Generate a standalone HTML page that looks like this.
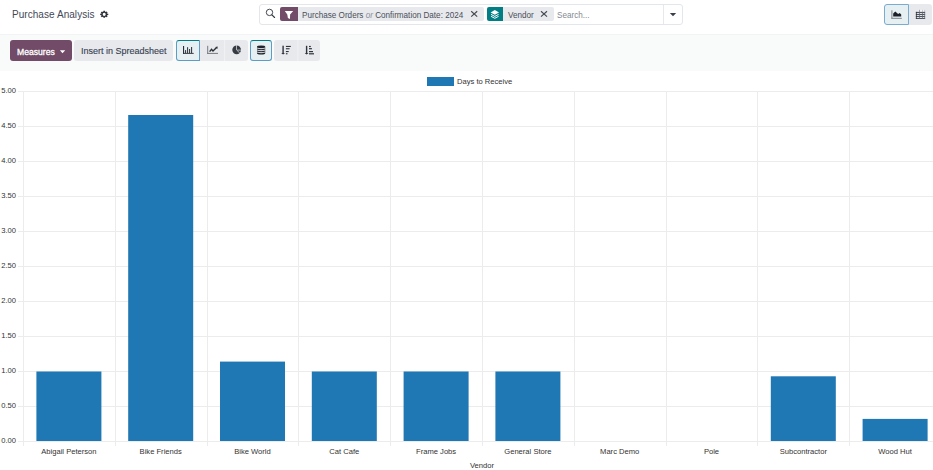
<!DOCTYPE html>
<html><head><meta charset="utf-8">
<style>
*{box-sizing:border-box;margin:0;padding:0}
html,body{width:933px;height:470px;overflow:hidden;background:#fff;font-family:"Liberation Sans",sans-serif;position:relative}
.abs{position:absolute}
#title{left:12px;top:8.7px;font-size:10px;letter-spacing:0.05px;color:#434857;white-space:nowrap;line-height:12px}
#searchbox{left:259px;top:4px;width:424px;height:21px;border:1px solid #e3e6ea;border-radius:3px;background:#fff}
#divider{left:663px;top:5px;width:1px;height:19px;background:#e6e8eb}
.pill{position:absolute;top:7px;height:14px;background:#e7e9ed;border-radius:2px}
.ficon{position:absolute;top:7px;height:14px;border-radius:2px 0 0 2px}
.ftext{position:absolute;top:10.2px;font-size:8.15px;line-height:12px;color:#4b4f58;white-space:nowrap}
#toolbar{left:0;top:34px;width:933px;height:37px;background:#f9fafa;border-top:1px solid #f2f3f4}
.btn{position:absolute;top:40px;height:21px;background:#e7e9ed;border-radius:3px}
.act{background:#e6f0f2;border:1px solid #5b9dc4;border-top-color:#017e84}
.yl{position:absolute;left:0;width:16px;text-align:right;font-size:7.6px;line-height:10px;color:#333;white-space:nowrap}
.xl{position:absolute;top:445.9px;width:100px;text-align:center;font-size:7.6px;line-height:12px;color:#333;white-space:nowrap}
</style></head><body>
<div id="title" class="abs">Purchase Analysis</div>
<div id="searchbox" class="abs"></div>
<div id="divider" class="abs"></div>
<div class="ficon" style="left:280px;width:18px;background:#714b67"></div>
<div class="pill" style="left:298px;width:186px;border-radius:0 2px 2px 0"></div>
<div class="ftext" style="left:302px">Purchase Orders <i style="color:#8a8f98">or</i> Confirmation Date: 2024</div>
<div class="ficon" style="left:487px;width:16px;background:#017e84"></div>
<div class="pill" style="left:503px;width:51px;border-radius:0 2px 2px 0"></div>
<div class="ftext" style="left:508px">Vendor</div>
<div class="ftext" style="left:557px;color:#858a92">Search...</div>
<div class="abs act" style="left:884px;top:4px;width:25px;height:21px;border-radius:3px 0 0 3px;border-color:#78acd0"></div>
<div class="abs" style="left:909px;top:4px;width:23px;height:21px;background:#e7e9ed;border-radius:0 3px 3px 0"></div>
<div id="toolbar" class="abs"></div>
<div class="btn" style="left:10px;width:62px;background:#714b67"></div>
<div class="abs" style="left:17px;top:45.7px;font-size:8.6px;line-height:12px;color:#fff;-webkit-text-stroke:0.3px #fff">Measures</div>
<div class="btn" style="left:74px;width:99px"></div>
<div class="abs" style="left:81px;top:45px;font-size:9px;line-height:12px;color:#374151;-webkit-text-stroke:0.12px #374151">Insert in Spreadsheet</div>
<div class="btn act" style="left:176px;width:24px;border-radius:3px 0 0 3px"></div>
<div class="btn" style="left:200px;width:24px;border-radius:0"></div>
<div class="btn" style="left:224px;width:24px;border-radius:0 3px 3px 0"></div>
<div class="btn act" style="left:250px;width:22px"></div>
<div class="btn" style="left:274px;width:23px;border-radius:3px 0 0 3px"></div>
<div class="btn" style="left:297px;width:23px;border-radius:0 3px 3px 0"></div>
<div class="abs" style="left:427px;top:77px;width:27px;height:9px;background:#1f77b4"></div>
<div class="abs" style="left:457px;top:75.6px;font-size:7.6px;line-height:12px;color:#333">Days to Receive</div>
<div class="abs" style="left:432px;top:460px;width:100px;text-align:center;font-size:7.6px;line-height:12px;color:#333">Vendor</div>
<svg id="chart" width="933" height="399" viewBox="0 71 933 399" style="position:absolute;left:0;top:71px" shape-rendering="crispEdges">
<rect x="18" y="91" width="925" height="1" fill="#ececec"/>
<rect x="18" y="126" width="925" height="1" fill="#ececec"/>
<rect x="18" y="161" width="925" height="1" fill="#ececec"/>
<rect x="18" y="196" width="925" height="1" fill="#ececec"/>
<rect x="18" y="231" width="925" height="1" fill="#ececec"/>
<rect x="18" y="266" width="925" height="1" fill="#ececec"/>
<rect x="18" y="301" width="925" height="1" fill="#ececec"/>
<rect x="18" y="336" width="925" height="1" fill="#ececec"/>
<rect x="18" y="371" width="925" height="1" fill="#ececec"/>
<rect x="18" y="406" width="925" height="1" fill="#ececec"/>
<rect x="18" y="441" width="925" height="1" fill="#ececec"/>
<rect x="23" y="91" width="1" height="355" fill="#ececec"/>
<rect x="115" y="91" width="1" height="355" fill="#ececec"/>
<rect x="207" y="91" width="1" height="355" fill="#ececec"/>
<rect x="298" y="91" width="1" height="355" fill="#ececec"/>
<rect x="390" y="91" width="1" height="355" fill="#ececec"/>
<rect x="482" y="91" width="1" height="355" fill="#ececec"/>
<rect x="574" y="91" width="1" height="355" fill="#ececec"/>
<rect x="666" y="91" width="1" height="355" fill="#ececec"/>
<rect x="757" y="91" width="1" height="355" fill="#ececec"/>
<rect x="849" y="91" width="1" height="355" fill="#ececec"/>
<rect x="36.4" y="371.5" width="65" height="69.5" fill="#1f77b4" shape-rendering="auto"/>
<rect x="128.2" y="115.0" width="65" height="326.0" fill="#1f77b4" shape-rendering="auto"/>
<rect x="220.0" y="361.6" width="65" height="79.4" fill="#1f77b4" shape-rendering="auto"/>
<rect x="311.8" y="371.5" width="65" height="69.5" fill="#1f77b4" shape-rendering="auto"/>
<rect x="403.6" y="371.5" width="65" height="69.5" fill="#1f77b4" shape-rendering="auto"/>
<rect x="495.4" y="371.5" width="65" height="69.5" fill="#1f77b4" shape-rendering="auto"/>
<rect x="770.8" y="376.3" width="65" height="64.7" fill="#1f77b4" shape-rendering="auto"/>
<rect x="862.6" y="418.9" width="65" height="22.1" fill="#1f77b4" shape-rendering="auto"/>
</svg>
<div class="yl" style="top:86.2px">5.00</div>
<div class="yl" style="top:121.2px">4.50</div>
<div class="yl" style="top:156.2px">4.00</div>
<div class="yl" style="top:191.2px">3.50</div>
<div class="yl" style="top:226.2px">3.00</div>
<div class="yl" style="top:261.2px">2.50</div>
<div class="yl" style="top:296.2px">2.00</div>
<div class="yl" style="top:331.2px">1.50</div>
<div class="yl" style="top:366.2px">1.00</div>
<div class="yl" style="top:401.2px">0.50</div>
<div class="yl" style="top:436.2px">0.00</div>
<div class="xl" style="left:18.9px">Abigail Peterson</div>
<div class="xl" style="left:110.7px">Bike Friends</div>
<div class="xl" style="left:202.5px">Bike World</div>
<div class="xl" style="left:294.3px">Cat Cafe</div>
<div class="xl" style="left:386.1px">Frame Jobs</div>
<div class="xl" style="left:477.9px">General Store</div>
<div class="xl" style="left:569.7px">Marc Demo</div>
<div class="xl" style="left:661.5px">Pole</div>
<div class="xl" style="left:753.3px">Subcontractor</div>
<div class="xl" style="left:845.1px">Wood Hut</div><svg class="abs" style="left:0;top:0" width="933" height="71" viewBox="0 0 933 71">
<path d="M103.16,11.98 L103.38,10.85 L105.02,10.85 L105.24,11.98 L105.42,12.04 L106.49,11.38 L107.66,12.38 L106.89,13.30 L106.96,13.46 L108.27,13.64 L108.27,15.06 L106.96,15.24 L106.89,15.40 L107.66,16.32 L106.49,17.32 L105.42,16.66 L105.24,16.72 L105.02,17.85 L103.38,17.85 L103.16,16.72 L102.98,16.66 L101.91,17.32 L100.74,16.32 L101.51,15.40 L101.44,15.24 L100.13,15.06 L100.13,13.64 L101.44,13.46 L101.51,13.30 L100.74,12.38 L101.91,11.38 L102.98,12.04Z M105.70,14.35 A1.5,1.6 0 1,0 102.70,14.35 A1.5,1.6 0 1,0 105.70,14.35Z" fill="#2f333b" fill-rule="evenodd"/>
<circle cx="269.5" cy="12.4" r="3.2" fill="none" stroke="#2f333b" stroke-width="0.9"/>
<line x1="271.9" y1="14.8" x2="274.6" y2="17.5" stroke="#2f333b" stroke-width="1.1" stroke-linecap="round"/>
<path d="M284.8,10.9 L293.2,10.9 L290.1,14.6 L290,19 L287.9,18 L287.3,14.6Z" fill="#fff"/>
<path d="M490.6,12.4 L494.8,10.1 L499,12.4 L494.8,14.7Z" fill="#fff"/>
<path d="M491,14.4 L494.8,16.4 L498.6,14.4" fill="none" stroke="#fff" stroke-width="1"/>
<path d="M491,16.3 L494.8,18.3 L498.6,16.3" fill="none" stroke="#fff" stroke-width="1"/>
<path d="M471.2,11.2 L477.2,16.6 M477.2,11.2 L471.2,16.6" stroke="#454951" stroke-width="1.15"/>
<path d="M541.0,11.2 L547.0,16.6 M547.0,11.2 L541.0,16.6" stroke="#454951" stroke-width="1.15"/>
<path d="M669.8,12.9 L676.2,12.9 L673,16.2Z" fill="#3b3f47"/>
<path d="M59.9,50.3 L65.2,50.3 L62.55,53.2Z" fill="#fff"/>
<rect x="183" y="46" width="1.1" height="7.8" fill="#2a2e36"/>
<rect x="183" y="52.9" width="10.7" height="0.9" fill="#2a2e36"/>
<rect x="185.1" y="50.1" width="1" height="3.1" fill="#2a2e36"/>
<rect x="187.1" y="47.2" width="1" height="6.0" fill="#2a2e36"/>
<rect x="189.1" y="49" width="1" height="4.2" fill="#2a2e36"/>
<rect x="191.1" y="47" width="1" height="6.2" fill="#2a2e36"/>
<rect x="207.2" y="45.8" width="1" height="8.1" fill="#77797e"/>
<rect x="207.2" y="52.9" width="10.8" height="1" fill="#77797e"/>
<path d="M209.6,51.6 L211.5,49.3 L213,51 L216.6,47.6" fill="none" stroke="#2a2e36" stroke-width="1.4"/>
<path d="M215.3,46.9 L217.7,46.6 L217.4,49Z" fill="#2a2e36"/>
<circle cx="236.65" cy="49.8" r="4.35" fill="#363a43"/>
<path d="M236.5,45.2 L236.5,49.9 L239.9,53.2 M237.2,50.1 L241.3,50.1" fill="none" stroke="#e7e9ed" stroke-width="0.7"/>
<path d="M257,46.6 Q257,45.4 261.1,45.4 Q265.2,45.4 265.2,46.6 L265.2,53.3 Q265.2,54.5 261.1,54.5 Q257,54.5 257,53.3Z" fill="#1f232b"/>
<path d="M256.8,47.9 Q261.1,49.3 265.4,47.9" fill="none" stroke="#c8ccd0" stroke-width="1.05"/>
<path d="M256.8,49.9 Q261.1,51.3 265.4,49.9" fill="none" stroke="#c8ccd0" stroke-width="1.05"/>
<path d="M256.8,51.9 Q261.1,53.3 265.4,51.9" fill="none" stroke="#c8ccd0" stroke-width="1.05"/>
<rect x="282.4" y="45.7" width="1.4" height="8" fill="#30343c"/>
<path d="M281.2,52.9 L285,52.9 L283.1,54.6Z" fill="#30343c"/>
<rect x="285.9" y="45.9" width="4.9" height="1.1" fill="#30343c"/>
<rect x="285.9" y="48.2" width="3.7" height="1.1" fill="#30343c"/>
<rect x="285.9" y="51" width="2.8" height="1.1" fill="#30343c"/>
<rect x="285.9" y="53.2" width="1.6" height="1.1" fill="#30343c"/>
<rect x="305.9" y="45.8" width="1.4" height="8" fill="#30343c"/>
<path d="M304.7,52.9 L308.5,52.9 L306.6,54.6Z" fill="#30343c"/>
<rect x="309" y="45.9" width="1.8" height="1.2" fill="#30343c"/>
<rect x="309" y="48.1" width="2.9" height="1.2" fill="#30343c"/>
<rect x="309" y="51" width="4.0" height="1.2" fill="#30343c"/>
<rect x="309" y="53.2" width="5.0" height="1.2" fill="#30343c"/>
<rect x="891.4" y="10.3" width="1" height="8.4" fill="#7d8088"/>
<rect x="891.4" y="17.8" width="10.4" height="1" fill="#7d8088"/>
<path d="M893.2,16.6 L893.2,13.4 L895.3,11.4 L898.1,14.1 L899.7,12.9 L901.2,14.4 L901.2,16.6Z" fill="#1b1f27"/>
<rect x="918.8" y="9.8" width="6.3" height="2.2" fill="#f4f5f6"/>
<rect x="919.3" y="9.8" width="0.7" height="2.2" fill="#7a8290"/>
<rect x="922.2" y="9.8" width="0.6" height="2.2" fill="#aab0ba"/>
<rect x="924.5" y="9.8" width="0.6" height="2.2" fill="#aab0ba"/>
<rect x="915.9" y="11.9" width="9.2" height="6.9" fill="#f4f5f6"/>
<rect x="915.9" y="11.9" width="9.2" height="0.9" fill="#2a2e38"/>
<rect x="915.9" y="13.9" width="9.2" height="0.9" fill="#2a2e38"/>
<rect x="915.9" y="15.9" width="9.2" height="0.9" fill="#2a2e38"/>
<rect x="915.9" y="17.9" width="9.2" height="0.9" fill="#2a2e38"/>
<rect x="915.9" y="11.9" width="0.8" height="6.9" fill="#2a2e38"/>
<rect x="919.3" y="11.9" width="0.7" height="6.9" fill="#5d6472"/>
<rect x="922.2" y="11.9" width="0.7" height="6.9" fill="#5d6472"/>
<rect x="924.4" y="11.9" width="0.7" height="6.9" fill="#5d6472"/>
<rect x="224.3" y="40" width="0.8" height="21" fill="#f3f4f6"/>
<rect x="297.5" y="40" width="0.8" height="21" fill="#f3f4f6"/>
</svg></body></html>
